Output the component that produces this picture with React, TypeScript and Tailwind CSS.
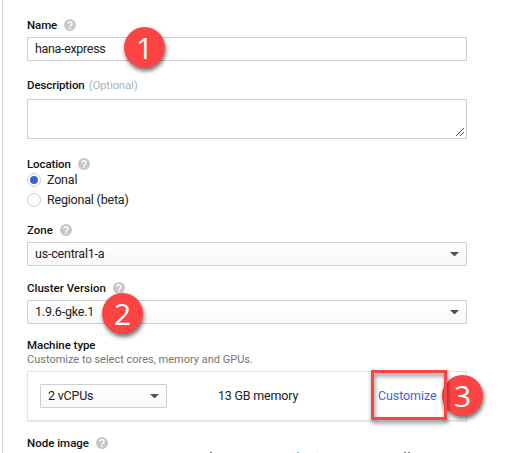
import React from 'react';

function HelpIcon() {
  return (
    <svg className="h-3 w-3 shrink-0" viewBox="0 0 12 12">
      <circle cx="6" cy="6" r="6" fill="#c8c8c8" />
      <path d="M4 4.700a2 2 0 1 1 3.100 1.600C6.400 6.800 6 7 6 7.700" fill="none" stroke="white" strokeWidth="1.4" />
      <path d="M5.300 8.600h1.400V10H5.300z" fill="white" />
    </svg>
  );
}

function Label({ text, help, note, className = '' }: { text: string; help?: boolean; note?: string; className?: string }) {
  return (
    <div className={`flex h-4 items-center text-[11.5px] leading-4 font-medium whitespace-nowrap text-[#111] ${className}`}>
      <span>{text}</span>
      {note && <span className="ml-1 font-normal tracking-[-0.2px] text-[#a9b6bc]">{note}</span>}
      {help && <span className="ml-[7px]"><HelpIcon /></span>}
    </div>
  );
}

function Select({ value, className = '' }: { value: string; className?: string }) {
  return (
    <div className={`flex h-6 items-center justify-between rounded-[1px] border border-[#cecece] bg-gradient-to-b from-white to-[#f8f8f8] pr-[7px] pl-[7px] ${className}`}>
      <span>{value}</span>
      <svg width="9" height="4" viewBox="0 0 9 4"><path d="M0 0h9L4.500 4.500z" fill="#505050" /></svg>
    </div>
  );
}

function Badge({ n, className }: { n: number; className: string }) {
  return (
    <div className={`absolute flex h-[41px] w-[41px] items-center justify-center rounded-full bg-[#fd4444] font-['Open_Sans',sans-serif] text-[30px] leading-none font-medium tracking-normal text-white shadow-[1px_3px_4px_rgba(0,0,0,0.55)] ${className}`}>
      {n}
    </div>
  );
}

function Radio({ label, checked }: { label: string; checked?: boolean }) {
  return (
    <div className="flex h-5 items-center gap-1.5">
      <span className="flex h-3.5 w-3.5 items-center justify-center rounded-full border border-[#cdcdcd] bg-white">
        {checked && <span className="h-2 w-2 rounded-full bg-[#3367d6]" />}
      </span>
      <span>{label}</span>
    </div>
  );
}

export default function App() {
  return (
    <div className="h-[453px] w-[518px] overflow-hidden bg-white pl-0.5 font-['Roboto',sans-serif] text-[12.5px] leading-4 tracking-[-0.2px] text-[#212121]">
      <div className="h-full border-l border-[#d6d6d6] pt-[17px] pl-6">
        <div className="flex w-[440px] flex-col">
          <Label text="Name" help className="tracking-[-0.1px]" />
          <div className="relative mt-1 flex h-6 items-center border border-[#cfcfcf] pl-[7px]">
            <span className="tracking-[-0.33px]">hana-express</span>
            <Badge n={1} className="-top-[11px] left-24" />
          </div>
          <div className="mt-4"><Label text="Description" note="(Optional)" className="tracking-[-0.1px]" /></div>
          <div className="mt-1.5 flex h-10 items-end justify-end border border-[#cfcfcf] p-0.5">
            <svg width="8" height="8" viewBox="0 0 8 8" shapeRendering="crispEdges" stroke="#555" strokeWidth="1">
              <path d="M0 8 8 0M4 8l4-4" />
            </svg>
          </div>
          <div className="mt-[17px]"><Label text="Location" help className="tracking-[-0.1px]" /></div>
          <div className="-mt-0.5">
            <Radio label="Zonal" checked />
            <Radio label="Regional (beta)" />
          </div>
          <div className="mt-3"><Label text="Zone" help className="tracking-normal" /></div>
          <Select value="us-central1-a" className="mt-1" />
          <div className="mt-3.5"><Label text="Cluster Version" help className="tracking-normal" /></div>
          <div className="relative mt-1">
            <Select value="1.9.6-gke.1" />
            <Badge n={2} className="-top-[7px] left-[75px]" />
          </div>
          <div className="mt-[13px]"><Label text="Machine type" className="tracking-[-0.05px]" /></div>
          <div className="-mt-px h-4 text-[11px] leading-4 tracking-normal text-[#757575]">Customize to select cores, memory and GPUs.</div>
          <div className="relative mt-[3px] flex h-[50px] items-center border border-[#e4e4e4] pl-3 shadow-[0_1px_1px_rgba(0,0,0,0.08)]">
            <Select value="2 vCPUs" className="w-[127px]" />
            <span className="ml-[51px] w-40">13 GB memory</span>
            <span className="tracking-[-0.1px] text-[#4760cf]">Customize</span>
            <Badge n={3} className="top-[3px] left-[414px]" />
            <div className="absolute -top-0.5 left-[343px] h-[50px] w-[76px] border-3 border-[#fd4444] drop-shadow-[1px_3px_2px_rgba(0,0,0,0.5)]" />
          </div>
          <div className="mt-3.5"><Label text="Node image" help className="tracking-normal" /></div>
          <div className="mt-px flex h-px">
            <span className="ml-[183px] w-0.5 bg-[#666]" />
            <span className="ml-[85px] w-0.5 bg-[#79b4c8]" />
            <span className="ml-[18px] w-px bg-[#eee]" />
            <span className="ml-[86px] w-0.5 bg-[#777]" />
            <span className="ml-0.5 w-0.5 bg-[#777]" />
          </div>
        </div>
      </div>
    </div>
  );
}
